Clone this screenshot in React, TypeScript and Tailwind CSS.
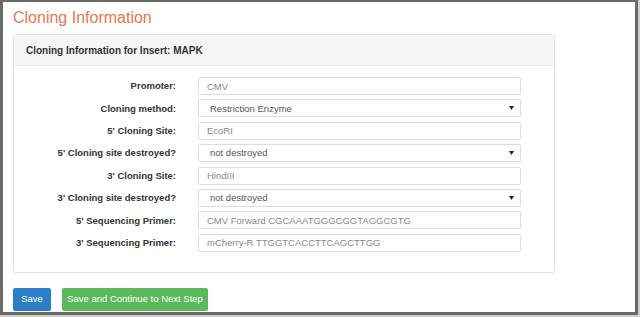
import React from "react";

type Row = { label: string; value: string; select?: boolean };

const rows: Row[] = [
  { label: "Promoter:", value: "CMV" },
  { label: "Cloning method:", value: "Restriction Enzyme", select: true },
  { label: "5' Cloning Site:", value: "EcoRI" },
  { label: "5' Cloning site destroyed?", value: "not destroyed", select: true },
  { label: "3' Cloning Site:", value: "HindIII" },
  { label: "3' Cloning site destroyed?", value: "not destroyed", select: true },
  { label: "5' Sequencing Primer:", value: "CMV Forward CGCAAATGGGCGGTAGGCGTG" },
  { label: "3' Sequencing Primer:", value: "mCherry-R TTGGTCACCTTCAGCTTGG" },
];

function Field({ row }: { row: Row }) {
  if (row.select) {
    return (
      <div className="flex h-[18px] w-[323px] items-center justify-between rounded-[2px] border border-[#dcdcdc] bg-white pl-[11px] pr-[6px] text-[9.5px] leading-none text-[#555]">
        <span>{row.value}</span>
        <svg width="5" height="4" viewBox="0 0 5 4">
          <path d="M0 0 L5 0 L2.5 4 Z" fill="#222" />
        </svg>
      </div>
    );
  }
  return (
    <input
      readOnly
      value={row.value}
      className="block h-[18px] w-[323px] rounded-[2px] border border-[#dcdcdc] bg-white px-[8px] text-[9.5px] leading-none text-[#888] outline-none"
    />
  );
}

export default function App() {
  return (
    <div className="h-[317px] w-[640px] bg-[#cfcfcf] font-['Liberation_Sans',Arial,sans-serif]">
      <div className="h-[315px] w-[638px] border-l-[3px] border-t-2 border-r-[3px] border-b-[3px] border-[#6a6a6a] bg-white">
        <div className="pl-[10px] pt-[6px]">
          <h1 className="text-[16px] leading-[20px] text-[#e8764d]">Cloning Information</h1>

          <div className="mt-[6px] w-[542px] rounded-[3px] border border-[#e2e2e2]">
            <div className="flex h-[31px] items-center border-b border-[#e6e6e6] bg-[#f5f5f5] px-[12px] text-[10px] font-bold text-[#333]">
              Cloning Information for Insert: MAPK
            </div>
            <div className="flex flex-col gap-[4.4px] pb-[20px] pt-[11px]">
              {rows.map((row) => (
                <div key={row.label} className="flex h-[18px] items-center leading-none">
                  <div className="w-[162px] text-right text-[9.5px] font-bold text-[#333]">
                    {row.label}
                  </div>
                  <div className="ml-[22px] flex">
                    <Field row={row} />
                  </div>
                </div>
              ))}
            </div>
          </div>

          <div className="mt-[15px] flex gap-[11px]">
            <button className="h-[23px] w-[38px] rounded-[2px] bg-[#2a7fc8] text-[9.5px] text-white">
              Save
            </button>
            <button className="h-[23px] w-[146px] rounded-[2px] bg-[#5cb85c] text-[9.5px] text-white">
              Save and Continue to Next Step
            </button>
          </div>
        </div>
      </div>
    </div>
  );
}
